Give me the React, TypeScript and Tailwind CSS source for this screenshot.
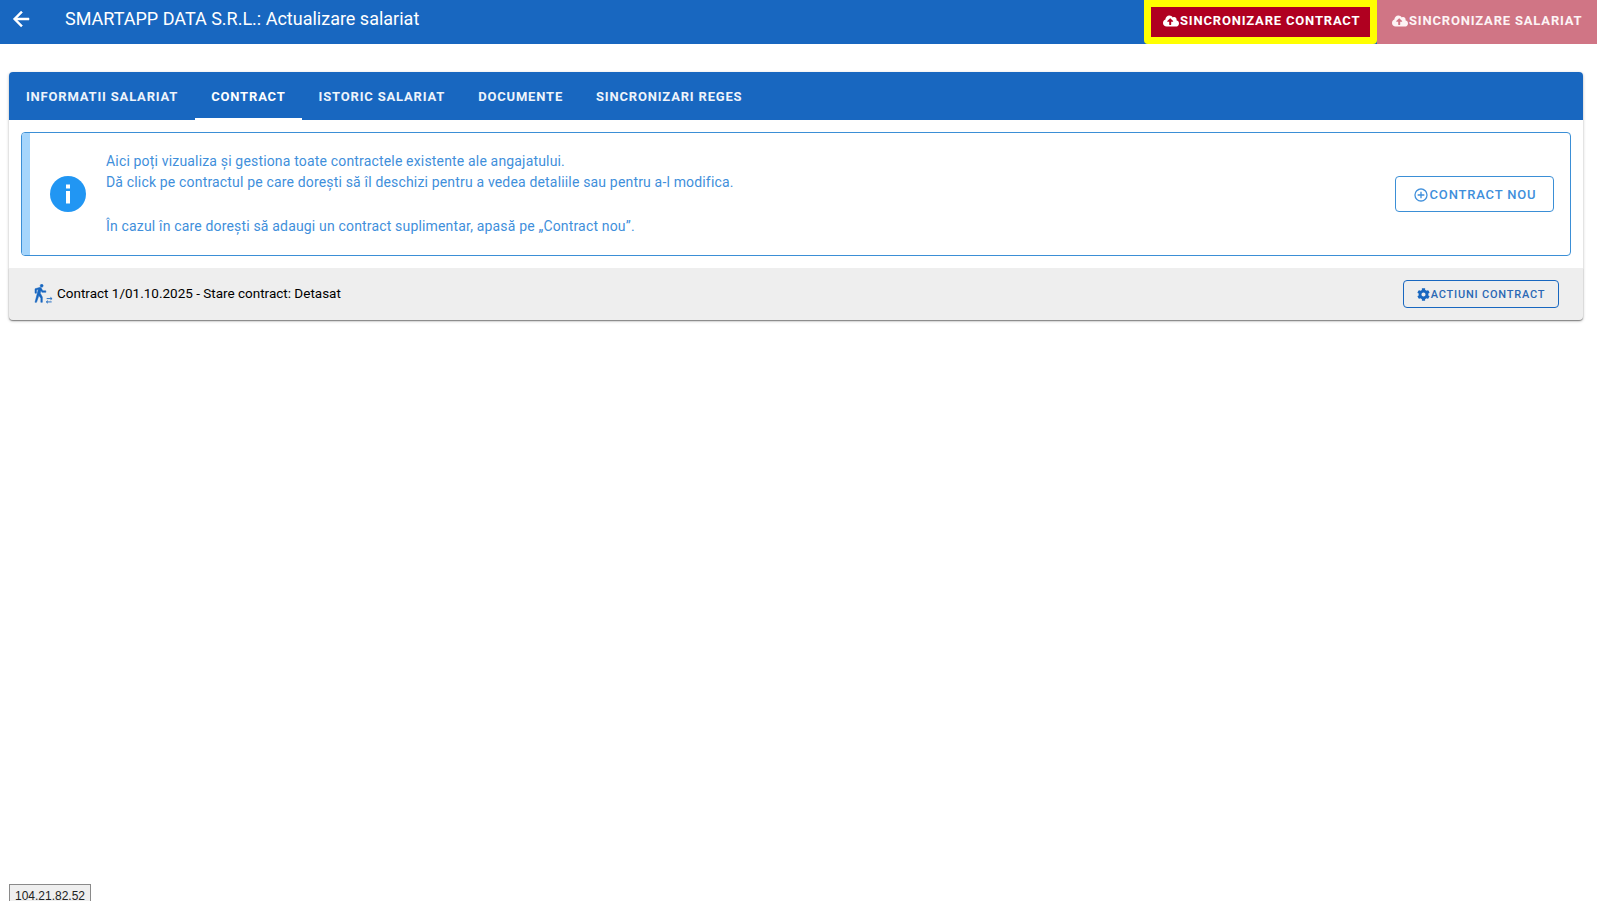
import React from "react";
import { FaCloudUploadAlt, FaCog } from "react-icons/fa";

const WALK =
  "M14.12,10H19V8.2H15.38L13.38,4.87C13.08,4.37 12.54,4.03 11.92,4.03C11.74,4.03 11.58,4.06 11.42,4.11L6,5.8V11H7.8V7.33L9.91,6.67L6,22H7.8L10.67,13.89L13,17V22H14.8V15.59L12.31,11.05L13.04,8.18M14,3.8C15,3.8 15.8,3 15.8,2C15.8,1 15,0.2 14,0.2C13,0.2 12.2,1 12.2,2C12.2,3 13,3.8 14,3.8Z";

function PlusCircleIcon() {
  return (
    <svg viewBox="0 0 24 24" className="w-4 h-4 fill-current shrink-0">
      <path d="M12,20C7.59,20 4,16.41 4,12C4,7.59 7.59,4 12,4C16.41,4 20,7.59 20,12C20,16.41 16.41,20 12,20M12,2A10,10 0 0,0 2,12A10,10 0 0,0 12,22A10,10 0 0,0 22,12A10,10 0 0,0 12,2M13,7H11V11H7V13H11V17H13V13H17V11H13V7Z" />
    </svg>
  );
}

const tabs = ["Informatii salariat", "Contract", "Istoric salariat", "Documente", "Sincronizari Reges"];

export default function App() {
  return (
    <div className="h-[901px] overflow-hidden flex flex-col bg-white font-['Roboto',sans-serif]">
      {/* toolbar */}
      <header className="h-11 shrink-0 bg-[#1867c0] flex items-stretch text-white">
        <div className="flex-1 flex items-start min-w-0">
          <svg viewBox="0 0 24 24" className="w-6 h-6 fill-current stroke-current stroke-[0.5] ml-[9px] mt-[7px] shrink-0">
            <path d="M20,11V13H8L13.5,18.5L12.08,19.92L4.16,12L12.08,4.08L13.5,5.5L8,11H20Z" />
          </svg>
          <h1 className="ml-[32px] mt-[7px] text-lg leading-[24px] font-normal">
            SMARTAPP DATA S.R.L.: Actualizare salariat
          </h1>
        </div>
        <div className="w-[233px] bg-[#ffff00] rounded-b-[4px] p-[7px]">
          <button className="w-full h-[30px] bg-[#b00020] flex items-center pl-3 pb-[2px] text-[13px] font-bold tracking-[0.82px] uppercase">
            <FaCloudUploadAlt className="w-4 h-4 shrink-0" />
            <span className="ml-[1px]">Sincronizare contract</span>
          </button>
        </div>
        <button className="w-[220px] bg-[#d07585] flex items-center pl-[15px] pb-[2px] text-[13px] font-bold tracking-[0.82px] uppercase text-[#fdf4f5]">
          <FaCloudUploadAlt className="w-4 h-4 shrink-0" />
          <span className="ml-[1px]">Sincronizare salariat</span>
        </button>
      </header>

      {/* card */}
      <main className="flex-1 px-[9px] pr-[14px] pt-7">
        <div className="rounded bg-white shadow-[0_1px_3px_rgba(0,0,0,0.3)]">
          <nav className="h-12 bg-[#1867c0] rounded-t flex text-white pl-[0.5px]">
            {tabs.map((t) => (
              <div
                key={t}
                className={
                  "px-[16.5px] pt-[4px] flex items-center border-b-2 text-[13px] font-bold tracking-[0.82px] uppercase " +
                  (t === "Contract" ? "border-white" : "border-transparent text-[#eef4fb]")
                }
              >
                {t}
              </div>
            ))}
          </nav>

          <div className="p-3 pb-0">
            <div className="h-[124px] border border-[#3b8fd6] rounded flex items-center">
              <div className="w-[8px] h-full bg-[#a5d5fc] rounded-l-[3px] shrink-0" />
              <svg viewBox="0 0 36 36" className="w-9 h-9 ml-5 shrink-0">
                <circle cx="18" cy="18" r="18" fill="#2196f3" />
                <rect x="16" y="8.5" width="4" height="4" fill="#fff" />
                <rect x="16" y="15" width="4" height="12.5" fill="#fff" />
              </svg>
              <div className="ml-5 flex-1 text-sm leading-[21.5px] tracking-[0.17px] text-[#3f8fdb]">
                <p>Aici poți vizualiza și gestiona toate contractele existente ale angajatului.</p>
                <p>Dă click pe contractul pe care dorești să îl deschizi pentru a vedea detaliile sau pentru a-l modifica.</p>
                <p className="mt-[22px]">În cazul în care dorești să adaugi un contract suplimentar, apasă pe „Contract nou”.</p>
              </div>
              <button className="w-[159px] h-9 mr-4 pt-[1px] border border-[#3b8fd6] rounded flex items-center justify-center text-[13px] font-medium tracking-[0.83px] uppercase text-[#3f8fdb]">
                <PlusCircleIcon />
                <span className="ml-[1px]">Contract nou</span>
              </button>
            </div>
          </div>

          <div className="mt-3 h-[52px] bg-[#eeeeee] rounded-b flex items-center pl-[21px] pr-6 shadow-[0_1px_1px_rgba(0,0,0,0.35)]">
            <svg viewBox="0 0 28.8 24" className="w-6 h-5 shrink-0 fill-[#1867c0]">
              <path d={WALK} className="stroke-[#1867c0] stroke-[0.6]" />
              <path
                d="M20,17.5H26M24.5,16L26.5,17.5L24.5,19M26,21.5H20M21.5,20L19.5,21.5L21.5,23"
                className="fill-none stroke-[#1867c0] stroke-[1.1]"
              />
            </svg>
            <span className="ml-[3px] pb-[2px] text-[13.5px] text-black">Contract 1/01.10.2025 - Stare contract: Detasat</span>
            <button className="ml-auto w-[156px] h-7 pt-[2px] border border-[#1867c0] rounded flex items-center justify-center text-[11px] font-medium tracking-[0.78px] uppercase text-[#2a68b4]">
              <FaCog className="w-[13px] h-[13px] shrink-0 -mt-[2px] text-[#1867c0]" />
              <span className="ml-[1px]">Actiuni contract</span>
            </button>
          </div>
        </div>
      </main>

      <div className="ml-[9px] w-[82px] h-[17px] shrink-0 border border-b-0 border-[#8a8a8a] bg-[#efefef] pt-[6px] text-center text-xs leading-[10px] text-[#222] font-['Liberation_Sans',sans-serif]">
        104.21.82.52
      </div>
    </div>
  );
}
